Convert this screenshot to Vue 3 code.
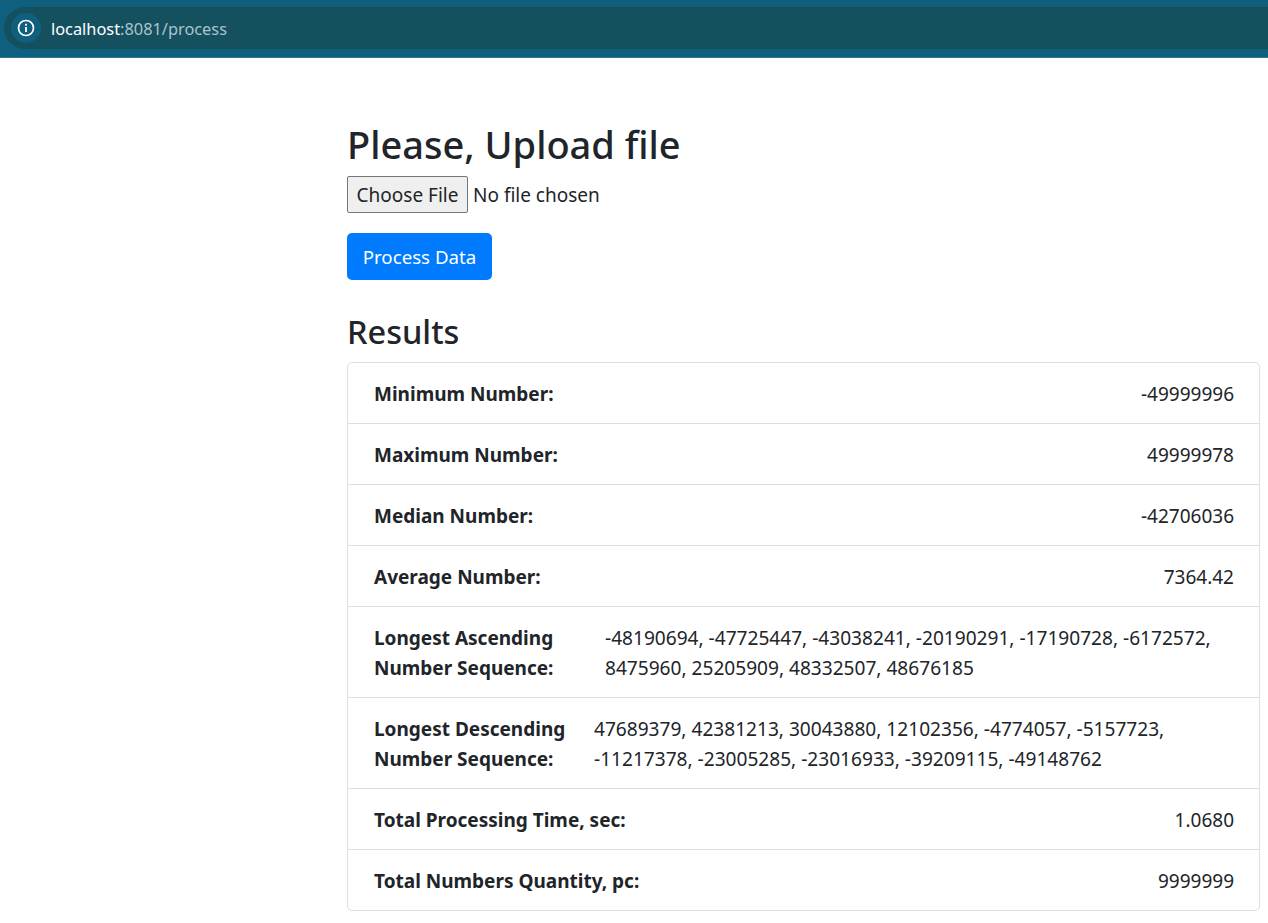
<template>
  <div class="page">
    <header class="browser-bar">
      <div class="address">
        <span class="site-info">
          <svg width="18" height="18" viewBox="0 0 18 18" fill="none">
            <circle cx="9" cy="9" r="7.5" stroke="#fff" stroke-width="1.7" />
            <rect x="8.1" y="8" width="1.8" height="5" fill="#fff" />
            <rect x="8.1" y="4.8" width="1.8" height="1.9" fill="#fff" />
          </svg>
        </span>
        <span class="url"><span class="host">localhost</span>:8081/process</span>
      </div>
    </header>

    <main class="container">
      <h2 class="title">Please, Upload file</h2>
      <div class="file-row">
        <button class="file-btn">Choose File</button>
        <span class="file-name">No file chosen</span>
      </div>
      <button class="process-btn">Process Data</button>

      <h3 class="results-title">Results</h3>
      <ul class="list">
        <li v-for="row in rows" :key="row.label" class="item" :class="{ long: row.lines }">
          <template v-if="row.lines">
            <strong class="label" :style="{ width: row.labelWidth + 'px' }">{{ row.label }}</strong>
            <div class="lines">
              <div v-for="line in row.lines" :key="line">{{ line }}</div>
            </div>
          </template>
          <template v-else>
            <strong class="label">{{ row.label }}</strong>
            <span>{{ row.value }}</span>
          </template>
        </li>
      </ul>
    </main>
  </div>
</template>

<script setup>
const rows = [
  { label: "Minimum Number:", value: "-49999996" },
  { label: "Maximum Number:", value: "49999978" },
  { label: "Median Number:", value: "-42706036" },
  { label: "Average Number:", value: "7364.42" },
  {
    label: "Longest Ascending Number Sequence:",
    labelWidth: 231,
    lines: [
      "-48190694, -47725447, -43038241, -20190291, -17190728, -6172572,",
      "8475960, 25205909, 48332507, 48676185",
    ],
  },
  {
    label: "Longest Descending Number Sequence:",
    labelWidth: 220,
    lines: [
      "47689379, 42381213, 30043880, 12102356, -4774057, -5157723,",
      "-11217378, -23005285, -23016933, -39209115, -49148762",
    ],
  },
  { label: "Total Processing Time, sec:", value: "1.0680" },
  { label: "Total Numbers Quantity, pc:", value: "9999999" },
];
</script>

<style scoped>
.page {
  font-family: "Noto Sans", "Open Sans", sans-serif;
  color: #212529;
  font-size: 19px;
  line-height: 30px;
}
.browser-bar {
  height: 58px;
  background: #0f5f7e;
  border-bottom: 1px solid #2f7a90;
  box-sizing: border-box;
  padding: 7px 0 8px 4px;
}
.address {
  height: 42px;
  background: #15505f;
  border-radius: 21px 0 0 21px;
  display: flex;
  align-items: center;
  padding-left: 7px;
}
.site-info {
  width: 30px;
  height: 30px;
  border-radius: 50%;
  background: #0f5f7e;
  display: flex;
  align-items: center;
  justify-content: center;
}
.url {
  margin-left: 10px;
  padding-top: 1px;
  font-size: 16.35px;
  color: #a9c4cc;
}
.host {
  color: #fff;
}
.container {
  margin-left: 347px;
  width: 913px;
  padding-top: 58px;
}
.title {
  margin: 0;
  font-size: 38px;
  font-weight: 500;
  line-height: 56px;
}
.file-row {
  display: flex;
  align-items: center;
  height: 37px;
  margin-top: 4px;
}
.file-btn {
  width: 121px;
  height: 37px;
  padding: 0;
  font: inherit;
  font-size: 19px;
  color: #212529;
  background: #efefef;
  border: 1px solid #767676;
  border-radius: 2px;
}
.file-name {
  margin-left: 5px;
}
.process-btn {
  display: block;
  margin-top: 20px;
  width: 145px;
  height: 47px;
  padding: 0;
  font: inherit;
  font-size: 18.7px;
  color: #fff;
  background: #007bff;
  border: none;
  border-radius: 5px;
}
.results-title {
  margin: 31px 0 9px;
  font-size: 32.5px;
  font-weight: 500;
  line-height: 42px;
}
.list {
  list-style: none;
  margin: 0;
  padding: 0;
  border: 1px solid #dfdfdf;
  border-radius: 5px;
}
.item {
  display: flex;
  justify-content: space-between;
  padding: 16px 25px 14px 26px;
  border-bottom: 1px solid #dfdfdf;
}
.item:last-child {
  border-bottom: none;
}
.item.long {
  justify-content: flex-start;
}
.label {
  font-weight: 700;
  flex-shrink: 0;
}
.lines {
  font-size: 19.1px;
}
</style>
